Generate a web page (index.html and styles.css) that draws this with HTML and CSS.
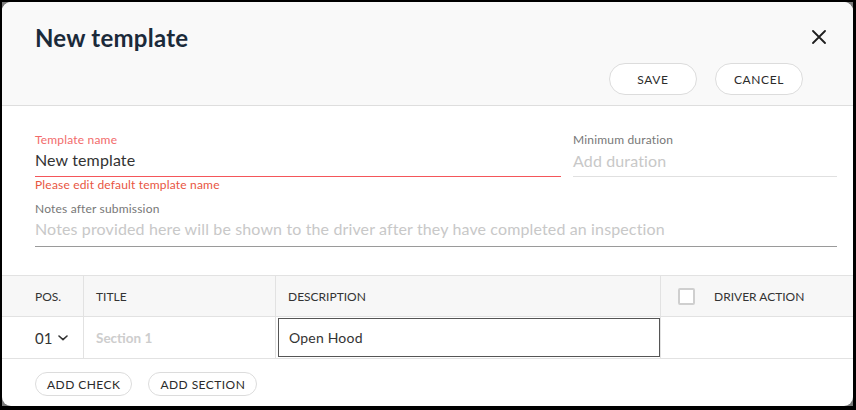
FILE: index.html
```html
<!DOCTYPE html>
<html>
<head>
<meta charset="utf-8">
<link rel="stylesheet" href="styles.css">
</head>
<body>
<div class="frame">
  <div class="dialog">
    <header class="head">
      <div class="head-top">
        <h1 class="title">New template</h1>
        <button class="close" aria-label="Close">
          <svg width="14" height="14" viewBox="0 0 14 14"><path d="M1 1L13 13M13 1L1 13" stroke="#1f1f1f" stroke-width="1.8" stroke-linecap="round"/></svg>
        </button>
      </div>
      <div class="head-actions">
        <button class="pill big">SAVE</button>
        <button class="pill big">CANCEL</button>
      </div>
    </header>
    <section class="form">
      <div class="row2">
        <div class="field name">
          <div class="label err">Template name</div>
          <div class="value">New template</div>
          <div class="hint">Please edit default template name</div>
        </div>
        <div class="field dur">
          <div class="label">Minimum duration</div>
          <div class="value ph">Add duration</div>
        </div>
      </div>
      <div class="field notes">
        <div class="label">Notes after submission</div>
        <div class="value ph">Notes provided here will be shown to the driver after they have completed an inspection</div>
      </div>
    </section>
    <div class="table">
      <div class="tr th">
        <div class="td c-pos">POS.</div>
        <div class="td c-title">TITLE</div>
        <div class="td c-desc">DESCRIPTION</div>
        <div class="td c-act"><span class="cb"></span>DRIVER ACTION</div>
      </div>
      <div class="tr body-row">
        <div class="td c-pos">01
          <svg class="chev" width="10" height="6" viewBox="0 0 10 6"><path d="M1 1L5 4.6L9 1" fill="none" stroke="#333" stroke-width="1.6" stroke-linecap="round" stroke-linejoin="round"/></svg>
        </div>
        <div class="td c-title sect">Section 1</div>
        <div class="td c-desc"><div class="desc-box">Open Hood</div></div>
        <div class="td c-act"></div>
      </div>
    </div>
    <div class="foot">
      <button class="pill small">ADD CHECK</button>
      <button class="pill small">ADD SECTION</button>
    </div>
  </div>
</div>
</body>
</html>
```
FILE: styles.css
```css
* { box-sizing: border-box; }
html, body { margin: 0; padding: 0; }
body {
  background: #000;
  width: 856px;
  height: 410px;
  overflow: hidden;
  font-family: "Lato", "Noto Sans", sans-serif;
  color: #333;
  letter-spacing: 0.18px;
}
.frame {
  margin: 2px 3px 0 2px;
  height: 404px;
  background: #7b7b7b;
}
.dialog {
  height: 404px;
  background: #fff;
  border-radius: 9px;
  overflow: hidden;
  display: flex;
  flex-direction: column;
}
.head {
  background: #f9f9f9;
  border-bottom: 1px solid #dedede;
  height: 104px;
  padding: 20px 27px 0 33px;
}
.head-top {
  display: flex;
  justify-content: space-between;
  align-items: center;
  height: 30px;
}
.title {
  margin: 0;
  font-size: 24px;
  font-weight: 700;
  color: #1b2a3a;
  letter-spacing: 0.25px;
}
.close {
  border: 0;
  background: none;
  padding: 0;
  width: 14px;
  height: 14px;
  display: flex;
}
.head-actions {
  display: flex;
  justify-content: flex-end;
  gap: 18px;
  margin-top: 11px;
  padding-right: 23px;
}
.pill {
  background: #fff;
  border: 1px solid #dcdcdc;
  border-radius: 999px;
  font-family: "Lato", "Noto Sans", sans-serif;
  color: #2b2b2b;
  text-transform: uppercase;
  cursor: pointer;
}
.pill.big {
  width: 88px;
  height: 32px;
  font-size: 12px;
  letter-spacing: 0.6px;
}
.pill.small {
  height: 24px;
  font-size: 12px;
  padding: 0 11px;
  letter-spacing: 0.45px;
}
.form {
  padding: 26px 16px 0 33px;
  height: 169px;
}
.row2 {
  display: flex;
  gap: 12px;
}
.field .label {
  font-size: 12px;
  color: #777;
  line-height: 15px;
}
.field .label.err { color: #f26b6b; }
.field .value {
  font-size: 16px;
  line-height: 20px;
  margin-top: 3px;
  padding-bottom: 6px;
  color: #333;
  border-bottom: 1px solid #e0e0e0;
  letter-spacing: 0.13px;
}
.field .value.ph { color: #c8c8c8; }
.name { width: 526px; }
.name .value { border-bottom-color: #f4565a; }
.dur { flex: 1; }
.dur .value { margin-top: 3px; padding-top: 1px; padding-bottom: 5px; }
.hint {
  font-size: 12px;
  color: #e8553f;
  line-height: 14px;
  margin-top: 1px;
}
.notes { margin-top: 9px; }
.notes .value { border-bottom-color: #9a9a9a; margin-top: 3px; padding-bottom: 7px; }
.table {
  border-top: 1px solid #e2e2e2;
}
.tr {
  display: grid;
  grid-template-columns: 81px 192px 385px 1fr;
  border-bottom: 1px solid #e2e2e2;
}
.th {
  background: #f7f7f7;
  height: 41px;
}
.body-row { height: 42px; }
.td {
  display: flex;
  align-items: center;
  font-size: 12px;
  color: #333;
  border-left: 1px solid #e2e2e2;
  padding-left: 12px;
  letter-spacing: 0;
}
.td.c-pos { border-left: 0; padding-left: 33px; }
.td.c-desc { padding-left: 12px; }
.th .td.c-act { padding-left: 17px; }
.cb {
  width: 17px;
  height: 17px;
  border: 2px solid #cfcfcf;
  border-radius: 2px;
  background: #fff;
  margin-right: 19px;
}
.body-row .td.c-pos { font-size: 15px; color: #333; }
.chev { margin-left: 6px; }
.sect { font-size: 13.5px; font-weight: 700; color: #cdcdcd; }
.body-row .td.c-desc { padding: 1px 0 1px 2px; align-items: stretch; border-left: 1px solid #e2e2e2; }
.desc-box {
  flex: 1;
  border: 1px solid #555;
  display: flex;
  align-items: center;
  padding-left: 10px;
  font-size: 14px;
  color: #333;
  letter-spacing: 0.2px;
}
.foot {
  display: flex;
  gap: 16px;
  padding: 13px 0 0 33px;
}
```
